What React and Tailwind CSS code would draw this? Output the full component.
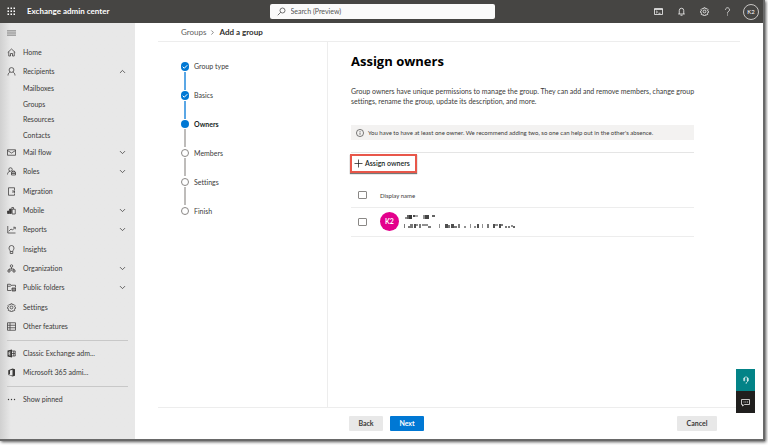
import { ChevronDown, ChevronUp, ChevronRight, Check } from "lucide-react";

const Icon = ({ children, className = "w-[9px] h-[9px]" }) => (
  <svg
    className={`${className} shrink-0`}
    viewBox="0 0 18 18"
    fill="none"
    stroke="currentColor"
    strokeWidth="1.5"
    aria-hidden="true"
  >
    {children}
  </svg>
);

const gear = (
  <>
    <circle cx="9" cy="9" r="2.8" />
    <path d="M7.6 1.5h2.8l.5 2 1.2.5 1.8-1.1 2 2-1.1 1.8.5 1.2 2 .5v2.3l-2 .5-.5 1.2 1.1 1.8-2 2-1.8-1.1-1.2.5-.5 2H7.6l-.5-2-1.2-.5-1.8 1.1-2-2 1.1-1.8-.5-1.2-2-.5V8.4l2-.5.5-1.2-1.1-1.8 2-2 1.8 1.1 1.2-.5z" />
  </>
);

const icons = {
  home: <path d="M1.5 9 9 2l7.5 7M3.5 7.5V16H7v-5h4v5h3.5V7.5" />,
  person: (
    <>
      <circle cx="9" cy="6" r="4.8" />
      <path d="M2 17c0-4 2-6 4.5-6.8M16 17c0-4-2-6-4.5-6.8" />
    </>
  ),
  mail: (
    <>
      <path d="M1 3.5h16v11H1z" />
      <path d="m1 5 8 5 8-5" />
    </>
  ),
  roles: (
    <>
      <circle cx="7" cy="5" r="3.5" />
      <path d="M1 15c0-3.5 2-6 5-6.5M9 10h8v6H9zM11 10V8h4v2M9 13h8" />
    </>
  ),
  migration: (
    <>
      <path d="M15 7V1.5H3v15h12V13" />
      <path d="M10 8h5v4M15 8l-4 4" />
    </>
  ),
  mobile: (
    <>
      <path d="M1 10h3v5H1zM5 6h3v9H5z" fill="currentColor" />
      <path d="M9.5 15V3H13v3M10 6.5h6.5V16H10z" />
    </>
  ),
  reports: <path d="M1.5 2v14H17M3.5 12.5 8 8l3 2 5-5M12.5 4.5h4v4" />,
  insights: (
    <path d="M6.5 13c0-2.500-2.500-3.500-2.500-7a5 5 0 0 1 10 0c0 3.500-2.500 4.500-2.500 7zM6.500 13v4h5v-4" />
  ),
  org: (
    <>
      <circle cx="9" cy="4" r="2.5" />
      <path d="M9 6.5V10M4 12v-2h10v2M2 12h4v4H2zM12 12h4v4h-4zM7.5 12.5h3" />
    </>
  ),
  folders: (
    <>
      <path d="M8 15H1V2.5h5.5l2 2H17V9M1 6.5h6l1.5-2" />
      <path d="M10 10h7v6h-7z" fill="currentColor" fillOpacity=".5" />
    </>
  ),
  settings: gear,
  table: <path d="M1 1.5h16v15H1zM6 1.5v15M1 6.5h16M1 11.5h16" />,
  exchange: (
    <>
      <path d="M1 3l9-2v16l-9-2z" fill="currentColor" stroke="none" />
      <path d="M7 6H4v6h3M4 9h2.5" stroke="#e8e8e8" />
      <path d="M10 4h6.5v10H10M10 9h6M13.5 4v10" />
    </>
  ),
  office: (
    <path
      d="M2.500 4.500 11 1l5 1.500v13L11 17l-8.500-3 8.500 1V3.500L6 5v7.500L2.500 14z"
      fill="currentColor"
      stroke="none"
    />
  ),
};

const navItems = [
  { label: "Mail flow", icon: "mail", open: true },
  { label: "Roles", icon: "roles", open: true },
  { label: "Migration", icon: "migration" },
  { label: "Mobile", icon: "mobile", open: true },
  { label: "Reports", icon: "reports", open: true },
  { label: "Insights", icon: "insights" },
  { label: "Organization", icon: "org", open: true },
  { label: "Public folders", icon: "folders", open: true },
  { label: "Settings", icon: "settings" },
  { label: "Other features", icon: "table" },
];

const steps = [
  { label: "Group type", state: "done" },
  { label: "Basics", state: "done" },
  { label: "Owners", state: "current" },
  { label: "Members", state: "todo" },
  { label: "Settings", state: "todo" },
  { label: "Finish", state: "todo" },
];

// x, y, width, height, opacity of each block in the redacted name
const blocks = [
  [1, 3, 2, 2, 0.5], [3, 1, 2, 4, 0.7], [5, 1, 3, 4, 0.9], [9, 1, 2, 2, 0.8], [11, 1, 3, 2, 0.4],
  [19, 1, 2, 4, 0.5], [21, 1, 4, 4, 0.85], [28, 1, 3, 2, 0.7],
  [0, 10, 1, 4, 0.6], [4, 12, 2, 2, 0.6], [6, 10, 3, 4, 0.6], [10, 10, 2, 4, 0.8], [12, 10, 2, 2, 0.5],
  [15, 10, 2, 4, 0.6], [18, 10, 4, 2, 0.5], [22, 10, 2, 2, 0.5], [24, 12, 3, 2, 0.6],
  [35, 10, 1, 4, 0.5], [41, 10, 3, 4, 0.8], [44, 11, 2, 3, 0.6], [47, 10, 3, 4, 0.8], [50, 12, 3, 2, 0.6],
  [54, 10, 2, 4, 0.6], [60, 12, 2, 2, 0.5], [66, 10, 1, 4, 0.5], [70, 12, 2, 2, 0.5], [73, 10, 2, 4, 0.8],
  [78, 10, 1, 4, 0.5], [83, 10, 2, 4, 0.6], [89, 10, 2, 4, 0.8], [91, 10, 3, 2, 0.5], [95, 10, 2, 4, 0.8],
  [97, 10, 2, 2, 0.6], [101, 12, 2, 2, 0.6], [104, 12, 2, 2, 0.6], [107, 11, 2, 2, 0.5], [109, 12, 2, 2, 0.7],
];

const NavItem = ({ label, icon, open, expanded }) => (
  <a href="#" className="flex items-center gap-[7px] h-[19px] pl-[7px] pr-[8px]">
    <Icon>{icons[icon]}</Icon>
    <span className="flex-1">{label}</span>
    {open && <ChevronDown size={9} strokeWidth={2} />}
    {expanded && <ChevronUp size={9} strokeWidth={2} />}
  </a>
);

const Step = ({ label, state, last }) => (
  <li className={`flex gap-[5px] ${last ? "h-[9px]" : "h-[29px]"}`}>
    <div className="flex flex-col items-center gap-px w-[8px]">
      {state === "done" && (
        <span className="flex items-center justify-center w-[8px] h-[9px] rounded-full bg-[#0078d4] text-white">
          <Check size={6} strokeWidth={4} />
        </span>
      )}
      {state === "current" && (
        <span className="w-[8px] h-[8px] rounded-full bg-[#0078d4]" />
      )}
      {state === "todo" && (
        <span className="w-[8px] h-[8px] rounded-full border border-[#8a8886]" />
      )}
      {!last && (
        <span
          className={`w-[2px] h-[18px] ${
            state === "done" ? "bg-[#5ba7e5]" : "bg-[#bebcba]"
          }`}
        />
      )}
    </div>
    <span
      className={`leading-[9px] ${
        state === "current" ? "font-bold text-[#201f1e]" : ""
      }`}
    >
      {label}
    </span>
  </li>
);

const Header = () => (
  <header className="flex items-center h-[23px] bg-[#464543] text-white">
    <div className="flex items-center flex-1 gap-[11px] pl-[7px]">
      <button aria-label="App launcher">
        <svg className="w-[9px] h-[9px]" viewBox="0 0 9 9" fill="currentColor">
          {[0, 3, 6].map((y) =>
            [0, 3, 6].map((x) => (
              <rect key={`${x}${y}`} x={x + 0.5} y={y + 0.5} width="1.5" height="1.5" />
            ))
          )}
        </svg>
      </button>
      <span className="text-[8px] font-bold">Exchange admin center</span>
    </div>
    <label className="flex items-center gap-[5px] w-[225px] h-[15px] pl-[7px] rounded-xs bg-[#fafafa] text-[#444]">
      <Icon>
        <circle cx="11" cy="7" r="5" />
        <path d="M7.5 10.5 1.5 16.5" />
      </Icon>
      <input
        type="text"
        aria-label="Search"
        placeholder="Search (Preview)"
        className="flex-1 text-[7px] outline-none placeholder:text-[#555]"
      />
    </label>
    <div className="flex items-center justify-end flex-1 gap-[11px] pl-[2px] pr-[4px]">
      <div className="flex items-center gap-[14px]">
        <button aria-label="Shell">
          <Icon>
            <path d="M1 3h16v12H1zM1 5h16M4 7.5l3 2.5-3 2.5M9 12.5h4" />
          </Icon>
        </button>
        <button aria-label="Notifications">
          <Icon>
            <path d="M2.5 14h13M4.5 14V7a4.5 4.5 0 0 1 9 0v7M7 16.5h4" />
          </Icon>
        </button>
        <button aria-label="Settings">
          <Icon>{gear}</Icon>
        </button>
        <button aria-label="Help">
          <Icon>
            <path d="M5 5.5a4 4 0 1 1 6 3.5c-1.5 1-2 1.5-2 4M9 15v2" />
          </Icon>
        </button>
      </div>
      <span className="flex items-center justify-center w-[16px] h-[16px] rounded-full border border-[#c8c6c4] text-[6px]">
        K2
      </span>
    </div>
  </header>
);

const Sidebar = () => (
  <nav className="w-[135px] shrink-0 bg-linear-to-r from-[#d0d0d0] to-[#e8e8e8] to-8% text-[#3b3a39]">
    <button aria-label="Menu" className="flex items-center h-[20px] pl-[7px]">
      <svg className="w-[9px] h-[6px]" viewBox="0 0 9 6" fill="#a3a3a3">
        <path d="M0 0h9v6H0z" fillOpacity=".6" />
        <path d="M0 0h9v1H0zM0 2.5h9v1H0zM0 5h9v1H0z" />
      </svg>
    </button>
    <NavItem label="Home" icon="home" />
    <NavItem label="Recipients" icon="person" expanded />
    <div className="grid auto-rows-fr items-center h-[62px] pl-[23px]">
      <a href="#">Mailboxes</a>
      <a href="#">Groups</a>
      <a href="#">Resources</a>
      <a href="#">Contacts</a>
    </div>
    <div className="grid auto-rows-fr items-center h-[193px]">
      {navItems.map((item) => (
        <NavItem key={item.label} {...item} />
      ))}
    </div>
    <div className="mx-[7px] mt-[4px] mb-[3px] border-t border-[#c8c8c8]" />
    <NavItem label="Classic Exchange adm..." icon="exchange" />
    <NavItem label="Microsoft 365 admi..." icon="office" />
    <div className="mx-[7px] mt-[4px] mb-[3px] border-t border-[#c8c8c8]" />
    <a href="#" className="flex items-center gap-[7px] h-[19px] pl-[7px]">
      <svg className="w-[9px] h-[9px]" viewBox="0 0 9 9" fill="currentColor">
        <circle cx="1.5" cy="4.5" r=".7" />
        <circle cx="4.5" cy="4.5" r=".7" />
        <circle cx="7.5" cy="4.5" r=".7" />
      </svg>
      Show pinned
    </a>
  </nav>
);

const Tick = ({ label }) => (
  <input
    type="checkbox"
    aria-label={label}
    className="block appearance-none w-[9px] h-[8px] rounded-[1px] border border-[#8a8886]"
  />
);

const OwnersPanel = () => (
  <section className="flex-1 border-l border-[#ededed] pl-[23px] pr-[46px]">
    <h1 className="mt-[9px] font-['Open_Sans','Noto_Sans',sans-serif] text-[13px] leading-[20px] font-bold text-black">
      Assign owners
    </h1>
    <p className="mt-[15px] -mr-[8px] leading-[10px]">
      Group owners have unique permissions to manage the group. They can add and
      remove members, change group settings, rename the group, update its
      description, and more.
    </p>
    <div className="flex items-center gap-[4px] h-[15px] mt-[19px] pl-[5px] bg-[#f3f2f1] text-[6px]">
      <Icon className="w-[8px] h-[8px]">
        <circle cx="9" cy="9" r="8" />
        <path d="M9 8v5M9 4.5v2" />
      </Icon>
      You have to have at least one owner. We recommend adding two, so one can
      help out in the other's absence.
    </div>
    <div className="mt-[12px] pt-px border-t border-[#e5e5e5]">
      <button className="flex items-center gap-[2px] h-[19px] w-[67px] -ml-px pl-[2px] border-2 border-[#e8574a] shadow-[0_1px_1px_#777] text-[7px] font-semibold text-[#201f1e]">
        <Icon>
          <path d="M9 1v16M1 9h16" />
        </Icon>
        Assign owners
      </button>
    </div>
    <table className="w-full mt-[11px] text-left text-[6px]">
      <thead>
        <tr className="h-[23px] border-b border-[#ededed]">
          <th className="w-[29px] pl-[7px]">
            <Tick label="Select all" />
          </th>
          <th className="font-normal">Display name</th>
        </tr>
      </thead>
      <tbody>
        <tr className="h-[29px] border-b border-[#ededed]">
          <td className="pl-[7px]">
            <Tick label="Select K2" />
          </td>
          <td>
            <div className="flex items-center gap-[5px]">
              <span className="flex items-center justify-center w-[19px] h-[19px] rounded-full bg-[#e3008c] text-[7px] font-bold text-white">
                K2
              </span>
              <svg className="w-[112px] h-[15px]" viewBox="0 0 112 15">
                {blocks.map(([x, y, w, h, o]) => (
                  <rect key={`${x}-${y}`} x={x} y={y} width={w} height={h} fill="#222" fillOpacity={o} />
                ))}
              </svg>
            </div>
          </td>
        </tr>
      </tbody>
    </table>
  </section>
);

export default function App() {
  return (
    <div className="flex min-h-screen pr-[3px] pb-[4px] bg-white font-['Lato','Noto_Sans',sans-serif] [font-variant-ligatures:none] text-[7px] leading-[9px] text-[#3b3a39]">
      <div className="relative flex flex-col flex-1 border-r-2 border-b-2 border-[#696969] shadow-[1px_1px_3px_#555]">
        <Header />
        <div className="flex flex-1">
          <Sidebar />
          <main className="flex flex-col flex-1 px-[23px] bg-white">
            <div className="flex items-center gap-[3px] h-[19px] pl-[23px] border-b border-[#ededed] text-[8px]">
              <a href="#" className="text-[#605e5c]">
                Groups
              </a>
              <ChevronRight size={7} />
              <span className="font-bold text-[#323130]">Add a group</span>
            </div>
            <div className="flex flex-1">
              <ol className="w-[169px] shrink-0 pl-[23px] pt-[20px]">
                {steps.map((step, i) => (
                  <Step key={step.label} {...step} last={i === steps.length - 1} />
                ))}
              </ol>
              <OwnersPanel />
            </div>
            <footer className="flex items-center gap-[7px] h-[32px] pl-[191px] pr-[23px] border-t border-[#ededed] font-bold">
              <button className="w-[34px] h-[15px] rounded-[1px] bg-[#e8e8e8]">Back</button>
              <button className="w-[34px] h-[15px] rounded-[1px] bg-[#0078d4] text-white">Next</button>
              <button className="w-[40px] h-[15px] ml-auto rounded-[1px] bg-[#e8e8e8]">Cancel</button>
            </footer>
          </main>
        </div>
        {/* help and feedback tabs */}
        <div className="absolute right-[8px] bottom-[26px] w-[19px] text-white">
          <button aria-label="Help" className="flex items-center justify-center w-full h-[22px] bg-[#038387]">
            <Icon className="w-[8px] h-[8px]">
              <path d="M5 8V6a4 4 0 0 1 8 0v4c0 3-2 5-4 5M4 5v6h2V5zM12 5v6h2V5zM8 16h3" />
            </Icon>
          </button>
          <button aria-label="Feedback" className="flex items-center justify-center w-full h-[22px] bg-[#201f1e]">
            <Icon>
              <path d="M1 3h16v10H7l-4 3v-3H1zM5 8h2M8.5 8h2M12 8h2" />
            </Icon>
          </button>
        </div>
      </div>
    </div>
  );
}
